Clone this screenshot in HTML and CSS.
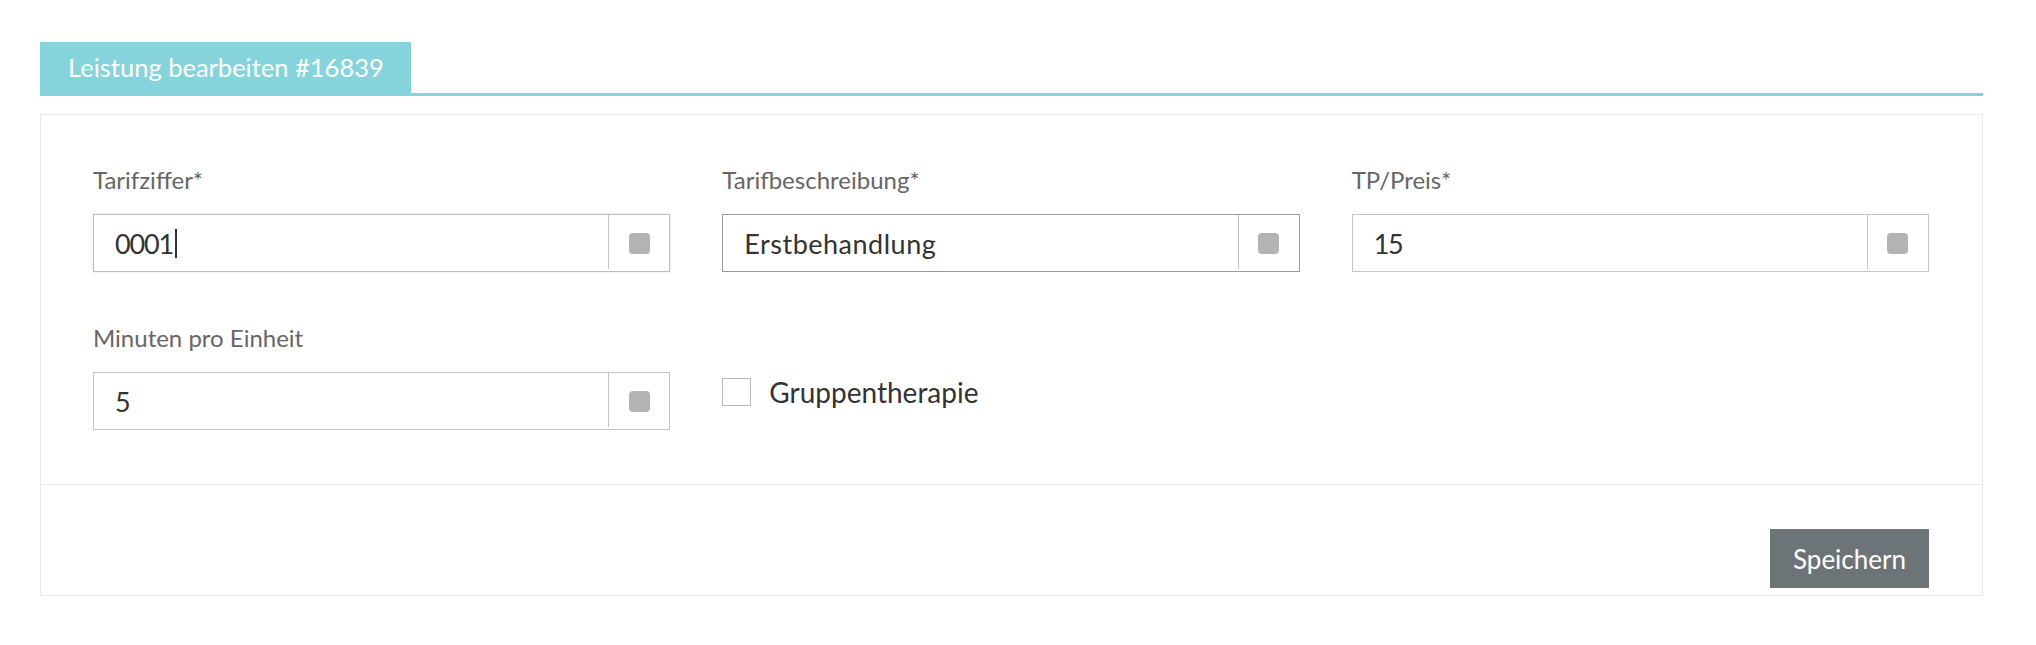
FILE: index.html
```html
<!DOCTYPE html>
<html lang="de">
<head>
    <meta charset="UTF-8">
    <title>Leistung bearbeiten</title>
    <link rel="stylesheet" href="styles.css">
</head>
<body>
<div class="page">
    <div class="tabs">
        <div class="tab">Leistung bearbeiten #16839</div>
    </div>
    <div class="panel">
        <div class="panel-body">
            <div class="form-grid">
                <div class="field">
                    <label class="field-label">Tarifziffer*</label>
                    <div class="input-group focused">
                        <div class="input-value numeric">0001<span class="caret"></span></div>
                        <div class="addon"><span class="addon-icon"></span></div>
                    </div>
                </div>
                <div class="field">
                    <label class="field-label">Tarifbeschreibung*</label>
                    <div class="input-group hover">
                        <div class="input-value">Erstbehandlung</div>
                        <div class="addon"><span class="addon-icon"></span></div>
                    </div>
                </div>
                <div class="field">
                    <label class="field-label">TP/Preis*</label>
                    <div class="input-group">
                        <div class="input-value numeric">15</div>
                        <div class="addon"><span class="addon-icon"></span></div>
                    </div>
                </div>
                <div class="field">
                    <label class="field-label">Minuten pro Einheit</label>
                    <div class="input-group">
                        <div class="input-value numeric">5</div>
                        <div class="addon"><span class="addon-icon"></span></div>
                    </div>
                </div>
                <div class="field check-field">
                    <span class="checkbox"></span>
                    <span class="check-label">Gruppentherapie</span>
                </div>
            </div>
        </div>
        <div class="panel-footer">
            <button class="btn-save">Speichern</button>
        </div>
    </div>
</div>
</body>
</html>
```

FILE: styles.css
```css
*{
    padding:0;
    margin:0;
    box-sizing: border-box;
}
body{
    font-family: Lato, "Open Sans", sans-serif;
    background-color: #fff;
    color: #333;
}
.page{
    padding: 42px 53px 0 40px;
}
.tabs{
    display: flex;
    border-bottom: 3px solid #85d4dc;
}
.tab{
    background-color: #85d4dc;
    color: #fff;
    font-size: 25.5px;
    height: 51px;
    line-height: 51px;
    padding: 0 27px 0 28px;
}
.panel{
    margin-top: 18px;
    border: 1px solid #e8e8e8;
}
.panel-body{
    padding: 50px 53px 54px 52px;
    border-bottom: 1px solid #e8e8e8;
}
.form-grid{
    display: grid;
    grid-template-columns: repeat(3, 1fr);
    column-gap: 52px;
    row-gap: 51px;
}
.field-label{
    display: block;
    font-size: 24px;
    line-height: 29px;
    color: #666;
    margin-bottom: 20px;
}
.input-group{
    display: flex;
    height: 58px;
    border: 1px solid #c4c4c4;
}
.input-group.focused{
    border-color: #bdbdbd;
    box-shadow: 0 0 3px rgba(0,0,0,.12);
}
.input-group.hover{
    border-color: #9a9a9a;
}
.input-value{
    flex: 1;
    display: flex;
    align-items: center;
    padding-left: 21px;
    font-size: 27px;
    letter-spacing: 0.5px;
    color: #333;
}
.input-value.numeric{
    letter-spacing: -1.2px;
}
.caret{
    display: inline-block;
    width: 2px;
    height: 29px;
    margin-left: 2px;
    background-color: #333;
}
.addon{
    width: 61px;
    display: flex;
    align-items: center;
    justify-content: center;
    border-left: 1px solid #c4c4c4;
    margin-bottom: 2px;
}
.addon-icon{
    width: 21px;
    height: 21px;
    border-radius: 4px;
    background-color: #b3b3b3;
    margin-top: 2px;
}
.check-field{
    display: flex;
    align-items: center;
    align-self: end;
    margin-bottom: 21px;
}
.checkbox{
    width: 29px;
    height: 28px;
    border: 1px solid #bbb;
    background-color: #fff;
}
.check-label{
    margin-left: 18px;
    font-size: 28px;
    color: #333;
}
.panel-footer{
    display: flex;
    justify-content: flex-end;
    padding: 44px 53px 7px;
}
.btn-save{
    font-family: Lato, "Open Sans", sans-serif;
    font-size: 26px;
    color: #fff;
    background-color: #6d7478;
    border: none;
    height: 59px;
    width: 159px;
}
```
